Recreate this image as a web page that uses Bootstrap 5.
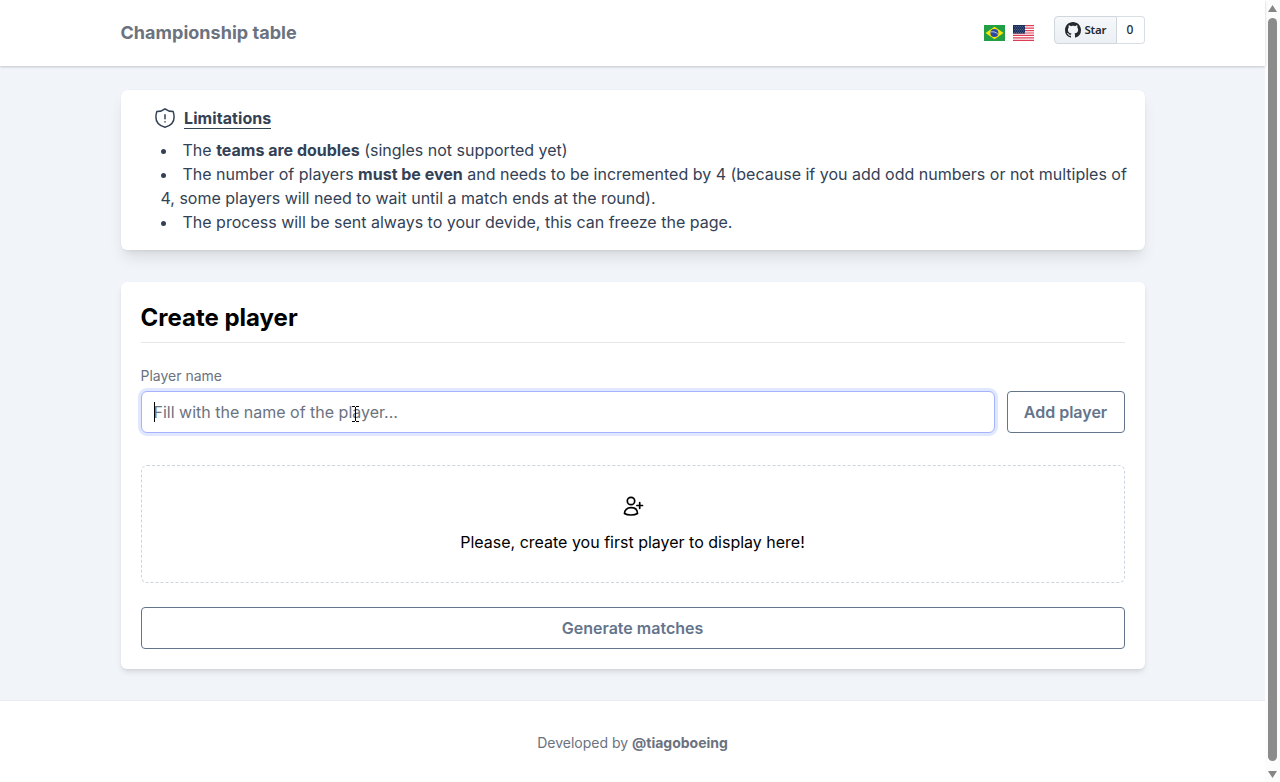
<!DOCTYPE html>
<html lang="en">
<head>
<meta charset="utf-8">
<meta name="viewport" content="width=device-width, initial-scale=1">
<title>Championship table</title>
<link rel="stylesheet" href="https://cdn.jsdelivr.net/npm/bootstrap@5.3.0/dist/css/bootstrap.min.css">
<style>
body{font-family:Inter,sans-serif;background:#f1f5f9;color:#000;overflow:hidden;height:782px}
svg{display:block;flex:none}
.page{width:1265px}
.wrap{width:1024px;margin:0 auto}
.topbar{height:66px;box-shadow:0 1px 3px rgba(0,0,0,.1),0 1px 2px rgba(0,0,0,.1);position:relative}
.brand{font-size:18px;line-height:28px;font-weight:700;color:#6b7280;letter-spacing:.03px}
.gh{height:28px;font-family:"Noto Sans","Open Sans",sans-serif;font-size:12px;font-weight:600;line-height:26px;color:#24292f;margin:-6px 0 0 20px}
.gh-star{width:63px;padding-left:10px;gap:4px;background:linear-gradient(#f6f8fa,#ebf0f4);border:1px solid #d0d6dd;border-radius:4px 0 0 4px}
.gh-star span{font-size:11.5px;letter-spacing:-.2px}
.gh-count{width:28px;font-weight:500;border:1px solid #d8dee4;border-left:0;border-radius:0 4px 4px 0;text-align:center}
.panel{border-radius:6px;background:#fff}
.limits{margin-top:24px;height:160px;padding:17px 16px 0 34px;color:#334155;line-height:24px;box-shadow:0 10px 15px -3px rgba(0,0,0,.1),0 4px 6px -4px rgba(0,0,0,.1),0 0 1px rgba(0,0,0,.12)}
.limits strong{font-weight:700}
.limits-head{gap:9.5px}
.limits-title{font-weight:700;line-height:20px;border-bottom:1px solid #334155;letter-spacing:.08px}
.limits ul{list-style:disc inside;padding:0 0 0 6px;margin:9px 0 0}
.maker{margin-top:32px;height:387px;padding:20px;box-shadow:0 4px 6px -1px rgba(0,0,0,.1),0 2px 4px -2px rgba(0,0,0,.1)}
.maker h1{font-size:24px;line-height:32px;font-weight:700;margin:0;padding-bottom:8px;border-bottom:1px solid #e5e7eb}
.field-label{font-size:14px;line-height:20px;color:#6b7280;margin:23px 0 5px}
.entry-row{gap:12px}
.entry{height:42px;padding:8px 12px;border:1px solid #a5b4fc;border-radius:6px;box-shadow:0 0 0 3px #e0e7ff;line-height:24px;color:#6b7280}
.caret{width:1px;height:20px;background:#000;top:10px;left:12px}
.pointer-i{left:210px;top:14px}
.act{height:42px;border:1px solid #64748b;border-radius:4px;color:#64748b;font-weight:600;line-height:24px;padding:8px 16px}
.act-add{width:118px}
.empty{height:118px;margin:32px 0 24px;border:1px dashed #cbd5e1;border-radius:6px;padding:29px 0 0}
.empty svg{margin-left:1px}
.empty-text{margin-top:11px}
.foot{margin-top:31px;height:82px;border-top:1px solid #e9edf2;font-size:14px;line-height:20px;color:#6b7280;padding-top:32px}
.scroller{width:15px;background:#fcfcfc}
.thumb{width:9px;height:743px;background:#8b8b8b;border-radius:5px}
.arrow-up{margin:5px 0 6px}
.arrow-down{margin-top:10px}
</style>
</head>
<body class="d-flex">
<div class="page">
  <header class="topbar bg-white">
    <div class="wrap h-100 d-flex align-items-center justify-content-between">
      <div class="brand">Championship table</div>
      <div class="d-flex align-items-center">
        <svg width="21" height="16" viewBox="0 0 21 16" class="me-2"><path fill="#229e45" d="M0 0h21v16H0z"/><path fill="#f8e509" d="m10.5 1.700 9 6.300-9 6.300-9-6.300z"/><circle cx="10.400" cy="8" r="4" fill="#2b49a3"/><path d="M6.700 6.900c3-.5 5.500.3 7.300 2.400" fill="none" stroke="#dce8e8" stroke-width=".8"/></svg>
        <svg width="21" height="16" viewBox="0 0 21 16"><path fill="#fff" d="M0 0h21v16H0z"/><path d="M0 .6h21M0 3.080h21M0 5.540h21M0 8h21M0 10.460h21M0 12.920h21M0 15.400h21" stroke="#dc3c54" stroke-width="1.230"/><path fill="#192f5d" d="M0 0h12v8.600H0z"/><path d="M1 1.500h10.500M2 3h9M1 4.500h10.500M2 6h9M1 7.500h10.500" stroke="#fff" stroke-opacity=".7" stroke-width=".55" stroke-dasharray=".7 1.300"/></svg>
        <div class="gh d-flex">
          <div class="gh-star d-flex align-items-center"><svg width="16" height="16" viewBox="0 0 16 16" fill="#24292f"><path d="M8 0c4.420 0 8 3.580 8 8a8.013 8.013 0 0 1-5.450 7.590c-.4.080-.55-.17-.55-.38 0-.27.010-1.130.010-2.200 0-.75-.25-1.230-.54-1.480 1.780-.2 3.650-.88 3.650-3.950 0-.88-.31-1.590-.82-2.150.080-.2.360-1.020-.080-2.120 0 0-.67-.22-2.200.82-.64-.18-1.320-.27-2-.27-.68 0-1.360.090-2 .27-1.530-1.030-2.200-.82-2.200-.82-.44 1.100-.16 1.920-.080 2.120-.51.560-.82 1.280-.82 2.150 0 3.060 1.860 3.750 3.640 3.950-.23.200-.44.550-.51 1.070-.46.210-1.610.550-2.330-.66-.15-.24-.6-.83-1.230-.82-.67.010-.27.380.010.530.34.190.73.900.82 1.130.16.450.68 1.310 2.690.940 0 .67.010 1.300.010 1.490 0 .21-.15.450-.55.380A7.995 7.995 0 0 1 0 8c0-4.420 3.580-8 8-8Z"/></svg><span>Star</span></div>
          <div class="gh-count">0</div>
        </div>
      </div>
    </div>
  </header>
  <main class="wrap">
    <section class="panel limits">
      <div class="limits-head d-flex align-items-center">
        <svg width="20" height="22" viewBox="0 0 20 22" fill="none" stroke="#334155" stroke-width="1.500" stroke-linecap="round" stroke-linejoin="round"><path d="M10 1.800c2.300 1.800 5 2.700 8.200 2.800.6 2 .9 3.700.9 5.500 0 5-3.600 8.900-9.100 10.200-5.500-1.300-9.100-5.200-9.100-10.200 0-1.800.3-3.500.9-5.500C5 4.500 7.700 3.600 10 1.800z"/><path d="M10 7.700v4M10 14.800v.1"/></svg>
        <div class="limits-title">Limitations</div>
      </div>
      <ul>
        <li>The <strong>teams are doubles</strong> (singles not supported yet)</li>
        <li>The number of players <strong>must be even</strong> and needs to be incremented by 4 (because if you add odd numbers or not multiples of 4, some players will need to wait until a match ends at the round).</li>
        <li>The process will be sent always to your devide, this can freeze the page.</li>
      </ul>
    </section>
    <section class="panel maker">
      <h1>Create player</h1>
      <div class="field-label">Player name</div>
      <div class="entry-row d-flex">
        <div class="entry flex-grow-1 position-relative bg-white">Fill with the name of the player...<span class="caret position-absolute"></span>
          <svg class="pointer-i position-absolute" width="7" height="16" viewBox="0 0 7 16" fill="none" stroke="#000" shape-rendering="crispEdges"><path d="M0 .5h3M4 .5h3M3.500 1v14M0 15.500h3M4 15.500h3"/></svg>
        </div>
        <button class="act act-add bg-white text-nowrap">Add player</button>
      </div>
      <div class="empty d-flex flex-column align-items-center">
        <svg width="24" height="24" viewBox="0 0 24 24" fill="none" stroke="#000" stroke-width="1.700" stroke-linecap="round" stroke-linejoin="round"><circle cx="10" cy="6" r="3.700"/><path d="M3.500 18.500c0-3.500 2.500-5.800 6.500-5.800s6.500 2.300 6.500 5.800c-1.800 1.200-4 1.500-6.500 1.500s-4.700-.3-6.500-1.500zM18.700 7.700v5.600M15.900 10.500h5.600"/></svg>
        <div class="empty-text">Please, create you first player to display here!</div>
      </div>
      <button class="act w-100 bg-white">Generate matches</button>
    </section>
  </main>
  <footer class="foot bg-white text-center">Developed by <strong>@tiagoboeing</strong></footer>
</div>
<div class="scroller d-flex flex-column align-items-center">
  <svg class="arrow-up" width="9" height="7" viewBox="0 0 9 7"><path d="M4.500 0 9 7H0z" fill="#858585"/></svg>
  <div class="thumb"></div>
  <svg class="arrow-down" width="9" height="7" viewBox="0 0 9 7"><path d="M0 0h9L4.500 7z" fill="#858585"/></svg>
</div>
<script src="https://cdn.jsdelivr.net/npm/bootstrap@5.3.0/dist/js/bootstrap.bundle.min.js"></script>
</body>
</html>
